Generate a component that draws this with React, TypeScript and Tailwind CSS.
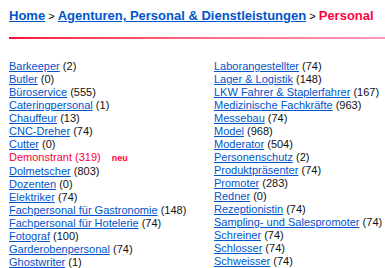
const left: [string, number][] = [
  ["Barkeeper", 2],
  ["Butler", 0],
  ["Büroservice", 555],
  ["Cateringpersonal", 1],
  ["Chauffeur", 13],
  ["CNC-Dreher", 74],
  ["Cutter", 0],
  ["Demonstrant", 319],
  ["Dolmetscher", 803],
  ["Dozenten", 0],
  ["Elektriker", 74],
  ["Fachpersonal für Gastronomie", 148],
  ["Fachpersonal für Hotelerie", 74],
  ["Fotograf", 100],
  ["Garderobenpersonal", 74],
  ["Ghostwriter", 1],
];

const right: [string, number][] = [
  ["Laborangestellter", 74],
  ["Lager & Logistik", 148],
  ["LKW Fahrer & Staplerfahrer", 167],
  ["Medizinische Fachkräfte", 963],
  ["Messebau", 74],
  ["Model", 968],
  ["Moderator", 504],
  ["Personenschutz", 2],
  ["Produktpräsenter", 74],
  ["Promoter", 283],
  ["Redner", 0],
  ["Rezeptionistin", 74],
  ["Sampling- und Salespromoter", 74],
  ["Schreiner", 74],
  ["Schlosser", 74],
  ["Schweisser", 74],
];

function Item({ name, count }: { name: string; count: number }) {
  if (name === "Demonstrant") {
    return (
      <li className="text-[#ff0033]">
        {name} ({count}) <span className="ml-2 text-[9px] font-bold">neu</span>
      </li>
    );
  }
  return (
    <li>
      <a href="#" className="text-[#0055cc] underline">
        {name}
      </a>{" "}
      ({count})
    </li>
  );
}

export default function App() {
  return (
    <div className="w-[385px] h-[268px] overflow-hidden bg-white pl-[9px] pt-[8px] font-['Tahoma','Liberation_Sans',sans-serif] text-[#111] whitespace-nowrap">
      <h1 className="text-[13px] font-bold leading-[16px]">
        <a href="#" className="text-[#0055cc] underline">Home</a>
        <span className="font-normal text-[11px] text-black"> &gt; </span>
        <a href="#" className="text-[#0055cc] underline">Agenturen, Personal &amp; Dienstleistungen</a>
        <span className="font-normal text-[11px] text-black"> &gt; </span>
        <span className="text-[#ff0040]">Personal</span>
      </h1>
      <div className="mt-[13px] h-[2px] bg-gradient-to-r from-[#ff0040] to-[#ff99bb]" />
      <div className="mt-[21px] flex text-[11px] leading-[13px]">
        <ul className="w-[205px]">
          {left.map(([n, c]) => (
            <Item key={n} name={n} count={c} />
          ))}
        </ul>
        <ul>
          {right.map(([n, c]) => (
            <Item key={n} name={n} count={c} />
          ))}
        </ul>
      </div>
    </div>
  );
}
